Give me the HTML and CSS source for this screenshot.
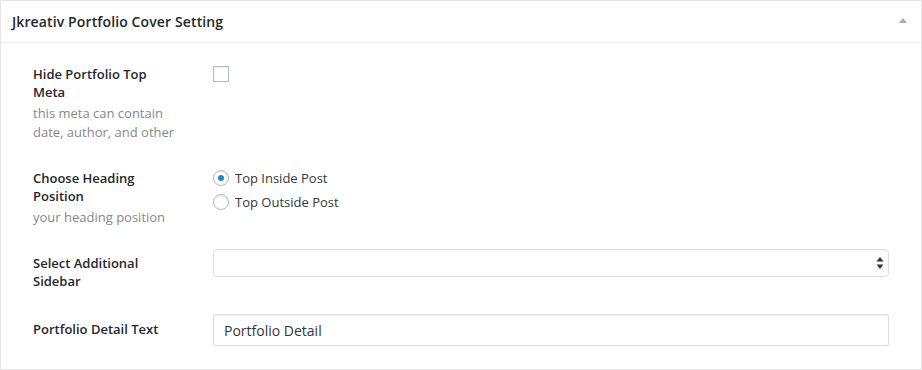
FILE: index.html
```html
<!DOCTYPE html>
<html lang="en">
<head>
    <meta charset="UTF-8">
    <title>Jkreativ Portfolio Cover Setting</title>
    <link rel="stylesheet" href="styles.css">
</head>
<body>
    <div class="postbox">
        <div class="postbox-header">
            <h2 class="postbox-title">Jkreativ Portfolio Cover Setting</h2>
            <span class="toggle-arrow"></span>
        </div>

        <div class="inside">
            <!-- Hide top meta -->
            <div class="field">
                <div class="field-label">
                    <label for="hide-meta">Hide Portfolio Top Meta</label>
                    <p class="field-desc">this meta can contain date, author, and other</p>
                </div>
                <div class="field-control">
                    <input type="checkbox" id="hide-meta" class="checkbox">
                </div>
            </div>

            <!-- Heading position -->
            <div class="field field-radio">
                <div class="field-label">
                    <label>Choose Heading Position</label>
                    <p class="field-desc">your heading position</p>
                </div>
                <div class="field-control">
                    <label class="radio-item">
                        <input type="radio" name="heading" class="radio" checked>
                        <span>Top Inside Post</span>
                    </label>
                    <label class="radio-item">
                        <input type="radio" name="heading" class="radio">
                        <span>Top Outside Post</span>
                    </label>
                </div>
            </div>

            <!-- Sidebar -->
            <div class="field field-select">
                <div class="field-label">
                    <label for="sidebar">Select Additional Sidebar</label>
                </div>
                <div class="field-control">
                    <div class="select-wrap">
                        <select id="sidebar" class="select">
                            <option></option>
                        </select>
                        <svg class="select-arrows" width="8" height="12" viewBox="0 0 8 12">
                            <path d="M4 0 L7.5 4.5 H0.5 Z" fill="#333"/>
                            <path d="M4 12 L7.5 7.5 H0.5 Z" fill="#333"/>
                        </svg>
                    </div>
                </div>
            </div>

            <!-- Detail text -->
            <div class="field field-text">
                <div class="field-label">
                    <label for="detail-text">Portfolio Detail Text</label>
                </div>
                <div class="field-control">
                    <input type="text" id="detail-text" class="text-input" value="Portfolio Detail">
                </div>
            </div>
        </div>
    </div>
</body>
</html>
```

FILE: styles.css
```css
* {
    margin: 0;
    padding: 0;
    box-sizing: border-box;
}

body {
    font-family: 'Open Sans', sans-serif;
    background: #f1f1f1;
    width: 922px;
    height: 370px;
    overflow: hidden;
}

.postbox {
    background: #fff;
    border: 1px solid #e5e5e5;
    width: 922px;
    height: 370px;
}

.postbox-header {
    display: flex;
    align-items: center;
    justify-content: space-between;
    height: 42px;
    padding: 0 14px 0 11px;
    border-bottom: 1px solid #eee;
}

.postbox-title {
    font-size: 14px;
    font-weight: 600;
    color: #23282d;
    line-height: 1.4;
    letter-spacing: 0.12px;
}

.toggle-arrow {
    width: 0;
    height: 0;
    border-left: 4px solid transparent;
    border-right: 4px solid transparent;
    border-bottom: 5px solid #aaa;
    margin-top: -2px;
}

.inside {
    display: flex;
    flex-direction: column;
    gap: 22px;
    padding: 22px 31px 0 32px;
}

.field {
    display: grid;
    grid-template-columns: 180px 1fr;
}

.field-label {
    width: 146px;
}

.field-label label {
    display: block;
    font-size: 13px;
    font-weight: 600;
    line-height: 18px;
    color: #23282d;
}

.field-desc {
    margin-top: 3px;
    font-size: 13px;
    line-height: 19px;
    color: #888;
}

.field-radio .field-label {
    padding-top: 5px;
}

.field-radio .field-control {
    padding-top: 2px;
}

.field-select .field-label {
    padding-top: 5px;
}

.field-text .field-label {
    padding-top: 8px;
}

.field-text .field-control {
    padding-top: 2px;
}

/* checkbox */
.checkbox {
    -webkit-appearance: none;
    appearance: none;
    display: block;
    width: 16px;
    height: 16px;
    margin-top: 1px;
    border: 1px solid #b4b9be;
    background: #fff;
    box-shadow: inset 0 1px 2px rgba(0, 0, 0, 0.07);
}

/* radios */
.radio-item {
    display: flex;
    align-items: center;
    height: 24px;
    font-size: 13px;
    color: #32373c;
}

.radio {
    -webkit-appearance: none;
    appearance: none;
    display: grid;
    place-items: center;
    width: 16px;
    height: 16px;
    margin-right: 6px;
    border: 1px solid #b4b9be;
    border-radius: 50%;
    background: #fff;
    box-shadow: inset 0 1px 2px rgba(0, 0, 0, 0.1);
}

.radio:checked::before {
    content: "";
    width: 6px;
    height: 6px;
    border-radius: 50%;
    background: #1e8cbe;
}

/* select */
.select-wrap {
    position: relative;
    width: 676px;
}

.select {
    -webkit-appearance: none;
    appearance: none;
    display: block;
    width: 100%;
    height: 28px;
    border: 1px solid #ddd;
    border-radius: 4px;
    background: #fff;
    font-family: inherit;
    font-size: 14px;
    box-shadow: inset 0 1px 2px rgba(0, 0, 0, 0.04);
}

.select-arrows {
    position: absolute;
    right: 5px;
    top: 8px;
}

/* text input */
.text-input {
    display: block;
    width: 676px;
    height: 32px;
    padding: 0 10px;
    border: 1px solid #ddd;
    border-radius: 2px;
    background: #fff;
    font-family: inherit;
    font-size: 14px;
    color: #32373c;
    box-shadow: inset 0 1px 2px rgba(0, 0, 0, 0.07);
}
```
